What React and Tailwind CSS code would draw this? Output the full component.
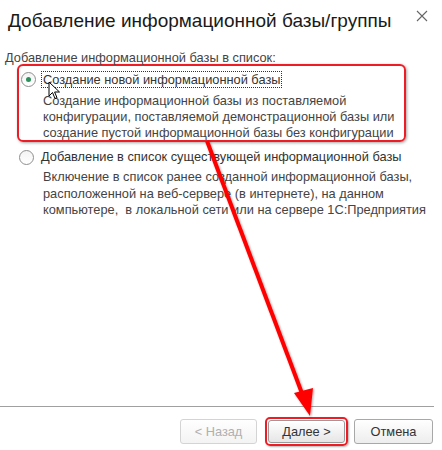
export default function App() {
  const font = { fontFamily: '"Liberation Sans", Arial, sans-serif' };
  return (
    <div className="relative w-[442px] h-[450px] bg-white overflow-hidden text-[#333]" style={font}>
      {/* Header */}
      <div className="flex items-start justify-between h-[44px]">
        <div className="pl-[8px] pt-[9px] text-[19px] leading-[24px] text-[#1a1a1a]">Добавление информационной базы/группы</div>
        <div className="pr-[14px] pt-[10px] text-[#555]">
          <svg width="12" height="12" viewBox="0 0 12 12"><path d="M1 1L11 11M11 1L1 11" stroke="#666" strokeWidth="1.1" /></svg>
        </div>
      </div>
      <div className="pl-[5px] text-[12.8px] leading-[16px] mt-[6px] text-[#444]">Добавление информационной базы в список:</div>

      {/* option 1 highlighted */}
      <div className="ml-[17px] mt-[-2px] w-[389px] h-[78px] border-2 border-[#ee1c25] rounded-[6px] shadow-[1px_1px_3px_rgba(0,0,0,0.35)]">
        <div className="flex items-center mt-[5px] ml-[2px]">
          <div className="w-[15px] h-[15px] rounded-full border border-[#8f8f8f] bg-gradient-to-b from-[#f4f4f4] to-white flex items-center justify-center">
            <div className="w-[5px] h-[5px] rounded-full bg-[#2f8f5a]"></div>
          </div>
          <div className="ml-[5px] px-[1px] text-[12.8px] leading-[15px] border border-dotted border-[#333]">Создание новой информационной базы</div>
        </div>
        <div className="ml-[24px] mt-[5px] text-[12.8px] leading-[16px] text-[#444]">
          <div>Создание информационной базы из поставляемой</div>
          <div>конфигурации, поставляемой демонстрационной базы или</div>
          <div>создание пустой информационной базы без конфигурации</div>
        </div>
      </div>

      {/* option 2 */}
      <div className="ml-[19px] mt-[7px]">
        <div className="flex items-center">
          <div className="w-[15px] h-[15px] rounded-full border border-[#8f8f8f] bg-gradient-to-b from-[#f4f4f4] to-white"></div>
          <div className="ml-[7px] text-[12.8px] leading-[16px] text-[#333]">Добавление в список существующей информационной базы</div>
        </div>
        <div className="ml-[24px] mt-[4px] text-[12.8px] leading-[16.5px] text-[#444]">
          <div>Включение в список ранее созданной информационной базы,</div>
          <div>расположенной на веб-сервере (в интернете), на данном</div>
          <div className="whitespace-pre">компьютере,  в локальной сети или на сервере 1С:Предприятия</div>
        </div>
      </div>

      {/* bottom */}
      <div className="absolute left-0 right-0 bottom-0">
        <div className="w-[434px] h-px bg-[#a0a0a0]"></div>
        <div className="flex justify-end items-center pr-[9px] mt-[11px] h-[27px] text-[12.8px]">
          <div className="w-[77px] h-[25px] rounded-[3px] border border-[#d4d4d4] bg-gradient-to-b from-white to-[#f3f3f3] flex items-center justify-center text-[#b0b0b0]">&lt; Назад</div>
          <div className="ml-[8px] p-[1px] rounded-[5px] border-2 border-[#ee1c25] shadow-[1px_1px_2px_rgba(0,0,0,0.3)]">
            <div className="w-[77px] h-[23px] rounded-[3px] border border-[#9a9a9a] bg-gradient-to-b from-white to-[#e6e6e6] flex items-center justify-center text-[#333]">Далее &gt;</div>
          </div>
          <div className="ml-[6px] w-[79px] h-[25px] rounded-[3px] border border-[#a8a8a8] bg-gradient-to-b from-white to-[#ededed] flex items-center justify-center text-[#333]">Отмена</div>
        </div>
        <div className="h-[5px]"></div>
      </div>

      {/* annotation arrow */}
      <svg className="absolute left-0 top-0 pointer-events-none" width="442" height="450">
        <defs>
          <filter id="sh" x="-20%" y="-20%" width="140%" height="140%">
            <feDropShadow dx="1" dy="1" stdDeviation="1" floodColor="#000" floodOpacity="0.35" />
          </filter>
        </defs>
        <g filter="url(#sh)">
          <line x1="207" y1="141" x2="303" y2="396" stroke="#ff0000" strokeWidth="4" />
          <polygon points="294,393 313,388 310,416" fill="#ff0000" />
        </g>
      </svg>

      {/* mouse cursor */}
      <svg className="absolute left-[48px] top-[81px]" width="14" height="20" viewBox="0 0 14 20">
        <path d="M1 1 L1 15 L4.5 11.5 L7 17.5 L9 16.7 L6.6 11 L11.5 11 Z" fill="#fff" stroke="#000" strokeWidth="1" strokeLinejoin="round" />
      </svg>
    </div>
  );
}
